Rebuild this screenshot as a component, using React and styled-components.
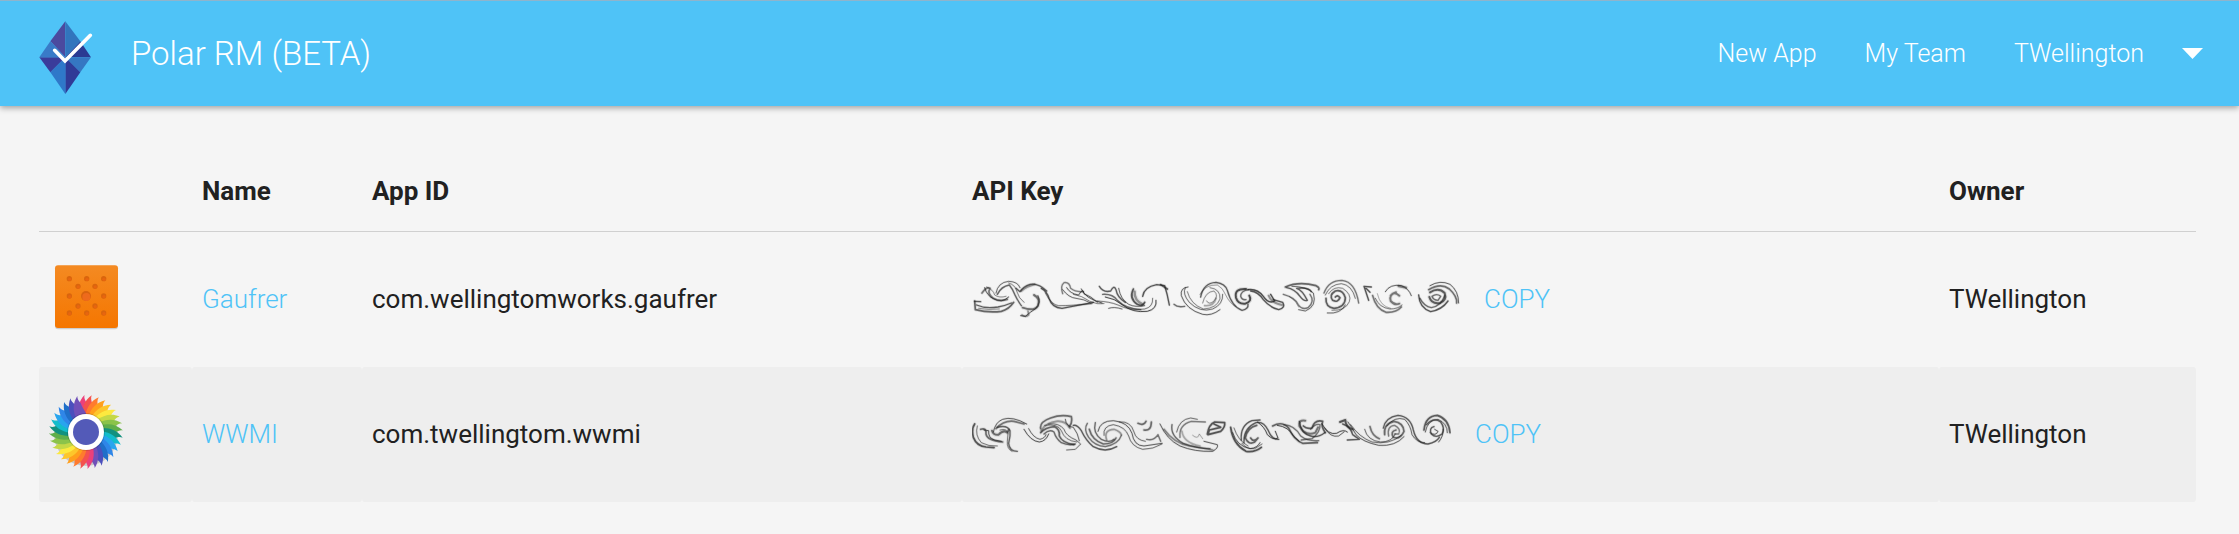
import React from "react";
import styled, { createGlobalStyle } from "styled-components";

const GlobalStyle = createGlobalStyle`
  * { box-sizing: border-box; }
  body {
    margin: 0;
    background: #f5f5f5;
    color: #212121;
    font-family: Roboto, "Liberation Sans", sans-serif;
    font-size: 26px;
    font-weight: 400;
    line-height: 32px;
  }
`;

const Header = styled.header`
  display: flex;
  align-items: center;
  justify-content: space-between;
  height: 106px;
  padding: 0 36px 0 39px;
  border-top: 1px solid #8fb4cc;
  background: #4fc3f7;
  color: #fff;
  font-weight: 300;
  box-shadow: 0 2px 6px rgba(0, 0, 0, 0.35);
`;

const Brand = styled.a`
  display: flex;
  align-items: center;
  gap: 38px;
  color: inherit;
  font-size: 33px;
  line-height: 40px;
  text-decoration: none;
`;

const Nav = styled.nav`
  display: flex;
  align-items: center;
  gap: 48px;
`;

const NavLink = styled.a`
  color: inherit;
  font-size: 25px;
  text-decoration: none;
`;

const AccountButton = styled.button`
  display: flex;
  align-items: center;
  gap: 38px;
  padding: 0;
  border: 0;
  background: none;
  color: inherit;
  font: inherit;
  font-size: 25px;
  cursor: pointer;
`;

const Main = styled.main`
  padding: 44px 43px 33px 39px;
`;

const Table = styled.table`
  width: 100%;
  table-layout: fixed;
  border-collapse: separate;
  border-spacing: 0;
`;

const Col = styled.col`
  width: ${(p) => p.$width};
`;

const HeadCell = styled.th`
  height: 82px;
  padding: 0 10px;
  border-bottom: 1px solid #d0d0d0;
  font-weight: 700;
  text-align: left;
`;

const Row = styled.tr`
  &:nth-child(even) td { background: #eeeeee; }
`;

const Cell = styled.td`
  height: 135px;
  padding: 0 10px 2px;
  border-radius: 3px;
`;

const IconCell = styled(Cell)`
  padding-bottom: 6px;
`;

const AppIcon = styled.svg`
  display: block;
`;

const AppLink = styled.a`
  color: #4fc3f7;
  font-weight: 300;
  text-decoration: none;
`;

const KeyGroup = styled.div`
  display: flex;
  align-items: center;
  gap: 24px;
`;

const CopyButton = styled.button`
  padding: 0;
  border: 0;
  background: none;
  color: #4fc3f7;
  font: inherit;
  font-weight: 300;
  cursor: pointer;
`;

function Logo() {
  return (
    <svg width="54" height="80" viewBox="116 40 162 240" aria-hidden="true">
      <path d="M195 170L195 62L150 122Z" fill="#4b4a9f" />
      <path d="M195 170L195 62L240 122Z" fill="#3275bd" />
      <path d="M195 170L240 122L272 170Z" fill="#2b3a92" />
      <path d="M195 170L272 170L240 215Z" fill="#3577c2" />
      <path d="M195 170L240 215L195 280Z" fill="#303a97" />
      <path d="M195 170L195 280L150 215Z" fill="#2f78c9" />
      <path d="M195 170L150 215L117 170Z" fill="#3a3c9b" />
      <path d="M195 170L117 170L150 122Z" fill="#397bc8" />
      <path d="M163 149L194 181L270 104" fill="none" stroke="#fff" strokeWidth="11" strokeLinecap="round" />
    </svg>
  );
}

const dots = [
  [118, 355], [170, 355], [221, 355], [144, 378], [195, 378], [118, 407],
  [221, 407], [144, 437], [195, 437], [118, 458], [170, 458], [221, 458],
];

function WaffleIcon() {
  return (
    <AppIcon width="72" height="72" viewBox="57 302 216 216" aria-hidden="true">
      <defs>
        <linearGradient id="waffle" x1="0" y1="0" x2="0" y2="1">
          <stop offset="0" stopColor="#f48a22" />
          <stop offset="1" stopColor="#f57600" />
        </linearGradient>
      </defs>
      <rect x="75" y="319" width="189" height="188" rx="9" fill="#000" opacity="0.16" />
      <rect x="75" y="315" width="189" height="188" rx="9" fill="url(#waffle)" />
      {dots.map(([x, y]) => (
        <g key={`${x}-${y}`}>
          <circle cx={x} cy={y} r="8" fill="#d9650d" />
          <circle cx={x + 1} cy={y + 2} r="5" fill="#e8650f" />
        </g>
      ))}
      <circle cx="168" cy="407" r="15" fill="#d8630f" />
      <circle cx="169" cy="410" r="12" fill="#ee6a1c" />
    </AppIcon>
  );
}

const petals = [
  "#ec407a", "#f4514e", "#ff7b2e", "#ff9f1c", "#fdc62b", "#fde93f", "#c5d846",
  "#8bc34a", "#5fae4b", "#12917f", "#12bccb", "#28a5ee", "#2f86e8", "#1f6fc9",
  "#4b4fbd", "#7150b8",
];

function WheelIcon() {
  return (
    <AppIcon width="72" height="72" viewBox="-37 -36 72 72" overflow="visible" aria-hidden="true">
      <circle r="32" cy="2" opacity="0.16" />
      {[...petals, ...petals].map((fill, i) => (
        <path
          key={i}
          d="M-5 -15C-6 -24 -4 -31 3 -37C2 -34 3 -32 4 -29C4 -25 6 -20 6 -15Z"
          fill={fill}
          transform={`rotate(${i * 11.25 - 7})`}
        />
      ))}
      <circle r="19" fill="#000" opacity="0.15" />
      <circle r="18" fill="#fff" />
      <circle r="13" fill="#535ab8" />
    </AppIcon>
  );
}

/* Each stroke is [path, width, opacity]. */
const gaufrerKey = [
  ["M48 112L50 138Q90 148 128 143Q150 138 165 116", 5, 0.75],
  ["M48 113L66 114M54 124Q80 136 118 130Q140 126 158 118", 4, 0.8],
  ["M60 134Q90 140 122 136", 3, 0.5],
  ["M70 88Q84 68 94 74Q84 90 104 104Q122 114 146 107", 5, 0.65],
  ["M78 72Q84 96 106 106Q128 120 150 100", 3, 0.8],
  ["M84 70Q104 78 108 94Q122 104 142 98", 3, 0.5],
  ["M112 88Q118 56 150 53Q178 54 184 72", 3, 0.7],
  ["M116 92Q128 68 152 64Q162 76 168 92Q180 116 188 126", 4, 0.75],
  ["M150 58Q170 64 174 82Q180 104 196 116", 3, 0.55],
  ["M172 74L184 84Q194 68 214 62Q240 58 264 82", 4, 0.8],
  ["M188 82Q204 68 228 62", 6, 0.5],
  ["M226 94Q246 104 238 126Q228 144 192 132", 6, 0.7],
  ["M238 96Q248 116 232 134Q214 146 200 158L186 156", 3, 0.8],
  ["M190 154Q202 162 210 154L208 142", 5, 0.5],
  ["M248 74Q266 84 272 106Q280 132 310 134L404 116", 4, 0.85],
  ["M260 88Q278 124 300 126Q340 126 400 120", 3, 0.6],
  ["M312 90Q304 66 316 57Q332 54 336 74Q350 86 374 84", 4, 0.6],
  ["M312 78Q330 102 352 104Q376 106 396 118", 3, 0.7],
  ["M324 72Q334 90 360 94Q374 70 376 90Q398 98 416 116", 3, 0.75],
  ["M368 76Q378 104 430 118", 3, 0.8],
  ["M344 92Q370 96 392 112Q416 124 436 120", 2, 0.8],
  ["M422 68Q434 88 456 82Q466 62 472 78Q476 102 500 116", 4, 0.8],
  ["M432 92Q462 90 476 110Q502 136 546 138", 4, 0.7],
  ["M440 100Q468 104 492 124Q522 148 566 143Q596 136 592 110", 3, 0.9],
  ["M416 112Q454 114 478 124Q514 142 558 136Q584 130 582 104", 3, 0.6],
  ["M450 134Q466 128 490 136", 3, 0.7],
  ["M480 74Q486 108 510 122Q530 132 558 126", 3, 0.7],
  ["M524 76Q510 104 536 122Q552 130 558 116", 5, 0.85],
  ["M528 84Q526 110 552 122", 7, 0.5],
  ["M552 98Q556 70 594 63L618 66Q626 90 632 124", 4, 0.85],
  ["M606 63L626 76", 5, 0.8],
  ["M646 122Q656 132 678 128", 4, 0.7],
  ["M688 70Q664 72 668 96Q682 138 732 152Q758 158 784 138", 3, 0.75],
  ["M680 72Q670 90 692 116Q724 148 762 136Q794 122 792 92", 3, 0.65],
  ["M686 84Q696 122 734 136Q774 134 784 106Q786 76 754 72", 3, 0.55],
  ["M726 100Q734 58 772 56Q800 60 806 80Q820 130 850 140Q870 136 868 122", 4, 0.8],
  ["M732 118Q740 84 766 82Q782 96 764 114Q750 124 744 112", 3, 0.5],
  ["M724 92Q740 62 776 64Q792 72 800 92Q812 118 832 130", 2, 0.6],
  ["M738 126Q766 128 772 104", 5, 0.4],
  ["M862 76Q826 74 832 102Q838 122 860 120Q882 112 872 96", 6, 0.9],
  ["M870 78Q846 82 846 98Q850 110 862 108", 4, 0.7],
  ["M868 78Q896 74 914 98Q930 122 948 112L936 92", 4, 0.9],
  ["M876 82Q898 84 914 108Q934 132 960 138Q982 132 972 116L944 108", 4, 0.85],
  ["M930 96Q938 118 970 124", 6, 0.5],
  ["M980 70Q1020 52 1072 66Q1084 72 1080 78", 5, 0.75],
  ["M974 92Q1010 102 1018 122Q1030 140 1048 132Q1070 114 1054 92", 4, 0.65],
  ["M984 72Q1008 76 1024 98Q1036 114 1046 110Q1030 78 1014 74Q1050 70 1058 84", 4, 0.8],
  ["M1000 68Q1042 68 1064 88Q1076 128 1040 142L1020 138", 3, 0.7],
  ["M992 98Q1014 112 1020 130", 2, 0.5],
  ["M1096 88Q1110 50 1150 50Q1190 54 1200 118", 4, 0.65],
  ["M1100 94Q1114 62 1148 60Q1180 64 1190 104", 3, 0.6],
  ["M1102 104Q1100 130 1126 134Q1160 130 1160 102Q1152 76 1130 82Q1110 94 1122 110Q1138 118 1144 102Q1136 92 1130 100", 5, 0.8],
  ["M1106 148Q1146 152 1160 124", 3, 0.7],
  ["M1110 90Q1126 66 1152 74Q1180 92 1172 114Q1160 142 1120 140", 3, 0.55],
  ["M1238 70L1216 68L1230 110M1222 74L1234 86", 4, 0.85],
  ["M1280 84Q1294 60 1328 66Q1350 74 1358 96", 3, 0.75],
  ["M1320 67L1342 72", 7, 0.6],
  ["M1312 86Q1290 92 1296 112Q1308 126 1322 120M1296 96Q1306 82 1322 96", 6, 0.65],
  ["M1242 96Q1252 136 1282 146Q1312 148 1328 130", 5, 0.65],
  ["M1250 104Q1262 132 1294 136Q1318 136 1330 124", 3, 0.6],
  ["M1256 90Q1264 128 1296 134", 2, 0.5],
  ["M1380 94Q1382 132 1416 144Q1450 138 1468 112", 4, 0.85],
  ["M1384 104Q1396 128 1418 132Q1448 126 1458 96", 4, 0.7],
  ["M1414 66Q1444 48 1474 62Q1500 82 1500 118", 3, 0.75],
  ["M1410 78Q1446 56 1472 76Q1496 98 1494 118", 5, 0.7],
  ["M1414 86Q1440 70 1458 88Q1466 110 1444 118Q1418 122 1412 100", 6, 0.8],
  ["M1420 98Q1434 88 1446 98L1438 110Q1424 110 1420 98", 4, 0.7],
];

const wwmiKey = [
  ["M48 76Q38 90 44 116Q54 142 82 145L106 147", 5, 0.85],
  ["M56 82Q48 110 68 132Q90 144 116 142", 3, 0.6],
  ["M66 92Q84 86 82 106Q86 126 132 130", 5, 0.7],
  ["M76 94L90 96Q88 118 108 124L128 128", 3, 0.8],
  ["M100 96Q104 110 120 108Q134 92 146 102L150 94", 6, 0.7],
  ["M104 100Q110 70 132 62Q162 52 204 76", 3, 0.75],
  ["M112 90Q136 64 166 68L196 76", 5, 0.65],
  ["M116 86Q146 78 154 96Q156 112 150 134Q152 158 176 158", 4, 0.75],
  ["M124 94Q144 88 148 104L146 128Q144 150 160 158", 3, 0.6],
  ["M196 92Q216 128 242 130Q262 128 270 106", 3, 0.8],
  ["M210 90Q224 118 244 122Q260 118 262 108", 3, 0.7],
  ["M246 90Q242 70 276 58Q308 46 338 54Q342 72 332 84", 5, 0.7],
  ["M248 96Q260 72 296 68Q320 66 334 88", 6, 0.45],
  ["M246 102Q260 86 288 84Q304 92 302 112Q310 132 346 138", 5, 0.75],
  ["M256 106Q272 90 286 100Q292 120 308 132Q330 142 350 136", 4, 0.7],
  ["M270 76Q302 72 316 92Q322 112 352 124L366 136L350 152L324 154", 3, 0.65],
  ["M258 80Q298 74 308 96Q318 126 354 130", 3, 0.6],
  ["M320 62Q322 84 344 86Q358 104 362 126", 3, 0.7],
  ["M344 80Q356 78 368 96Q382 126 404 144Q440 164 474 144", 4, 0.8],
  ["M386 74Q374 92 390 116Q408 142 440 144Q480 136 488 110", 4, 0.65],
  ["M392 92Q400 124 434 136Q464 136 472 118", 5, 0.7],
  ["M410 72Q402 104 428 122Q452 134 466 122", 4, 0.7],
  ["M418 98Q424 66 464 66Q508 70 520 104Q526 142 556 142L610 134", 3, 0.75],
  ["M436 110Q432 82 464 78Q500 84 510 112Q518 144 552 152Q584 152 610 136", 3, 0.65],
  ["M444 124Q434 94 466 92Q484 98 488 108", 5, 0.45],
  ["M482 70Q516 66 526 100Q532 124 560 128", 3, 0.65],
  ["M538 74Q556 82 562 68M556 94Q578 98 578 70", 5, 0.7],
  ["M564 122Q586 128 598 108L606 128", 4, 0.65],
  ["M604 76Q624 122 664 142Q708 160 762 158Q780 148 776 138L736 128", 3, 0.75],
  ["M616 92Q646 134 692 142Q734 148 762 154", 5, 0.55],
  ["M640 78Q634 112 674 134Q716 150 754 150", 4, 0.7],
  ["M654 100Q662 62 696 58L716 62", 3, 0.65],
  ["M664 116Q660 78 698 68L740 70", 4, 0.6],
  ["M670 98Q674 132 724 142", 5, 0.35],
  ["M702 110Q718 124 722 106L732 120", 3, 0.35],
  ["M746 106Q750 78 768 70L798 72Q800 86 786 98L748 108L752 94L786 86L766 76", 5, 0.85],
  ["M816 86Q822 136 862 158Q888 162 908 146", 5, 0.85],
  ["M822 102Q834 142 874 150Q896 148 904 132", 3, 0.75],
  ["M826 88Q838 126 868 142", 3, 0.6],
  ["M848 124Q844 80 880 66L904 64", 4, 0.8],
  ["M856 132Q854 88 892 72Q914 66 928 94Q940 124 960 122", 4, 0.8],
  ["M876 118Q884 132 898 118L888 130Q870 140 860 118Q866 86 894 80", 5, 0.75],
  ["M910 136L888 150Q862 152 850 134", 3, 0.6],
  ["M896 70Q918 84 926 108Q944 126 958 118L950 98", 3, 0.85],
  ["M942 82Q970 66 990 88Q1006 124 1032 134L1076 132", 5, 0.75],
  ["M956 80Q990 84 1006 114L1022 128", 3, 0.85],
  ["M976 78Q1008 80 1026 112Q1046 128 1080 126", 4, 0.65],
  ["M1022 68Q1026 104 1056 112Q1078 118 1098 102", 4, 0.8],
  ["M1040 66Q1020 62 1022 82Q1040 114 1070 102L1078 86", 6, 0.65],
  ["M1034 82Q1044 92 1060 88Q1068 62 1092 68Q1086 82 1100 102", 5, 0.8],
  ["M1056 92Q1070 74 1084 78Q1086 100 1060 120L1028 124", 4, 0.65],
  ["M1090 76Q1108 110 1134 104Q1154 90 1166 100", 3, 0.85],
  ["M1098 88Q1116 118 1140 112L1156 100", 3, 0.7],
  ["M1144 70L1160 64Q1160 84 1182 92", 6, 0.85],
  ["M1152 76Q1176 84 1182 108L1202 122L1166 124", 4, 0.8],
  ["M1168 70Q1180 86 1192 108Q1212 130 1260 140Q1310 144 1336 114", 3, 0.75],
  ["M1176 78Q1202 116 1240 130Q1292 140 1328 110", 3, 0.65],
  ["M1218 92Q1226 126 1266 130Q1300 130 1310 106", 3, 0.65],
  ["M1234 84Q1240 112 1262 120", 5, 0.65],
  ["M1274 88Q1280 56 1318 50Q1356 54 1364 94Q1374 136 1408 136Q1434 130 1442 116", 4, 0.8],
  ["M1278 108Q1274 76 1306 68Q1334 72 1336 98Q1324 124 1304 116Q1294 98 1312 94", 5, 0.7],
  ["M1284 82Q1308 52 1338 62Q1356 80 1360 108Q1374 132 1398 132", 3, 0.7],
  ["M1290 112Q1284 82 1308 80Q1328 90 1320 106L1308 106", 4, 0.6],
  ["M1396 94Q1400 52 1436 50Q1470 60 1474 102", 5, 0.8],
  ["M1400 100Q1406 64 1438 62Q1466 74 1466 102", 3, 0.7],
  ["M1404 78Q1424 54 1446 70Q1460 88 1450 106Q1432 120 1418 106Q1410 88 1426 84", 4, 0.8],
  ["M1414 102Q1432 114 1438 98L1428 92M1440 130Q1454 114 1454 92", 3, 0.75],
];

function MaskedKey({ strokes, width }) {
  return (
    <svg
      width={width}
      height="40"
      viewBox={`40 46 ${width * 3} 120`}
      fill="none"
      stroke="#222"
      strokeLinecap="round"
      strokeLinejoin="round"
      role="img"
      aria-label="Obscured API key"
    >
      {strokes.map(([d, w, o], i) => (
        <g key={i}>
          <path d={d} strokeWidth={w * 2} opacity={o * 0.15} />
          <path d={d} strokeWidth={w} opacity={o * 0.85} />
        </g>
      ))}
    </svg>
  );
}

const apps = [
  { name: "Gaufrer", id: "com.wellingtomworks.gaufrer", Icon: WaffleIcon, strokes: gaufrerKey, keyWidth: 488 },
  { name: "WWMI", id: "com.twellingtom.wwmi", Icon: WheelIcon, strokes: wwmiKey, keyWidth: 479 },
];

export default function App() {
  return (
    <>
      <GlobalStyle />
      <Header>
        <Brand href="#">
          <Logo />
          <span>Polar RM (BETA)</span>
        </Brand>
        <Nav>
          <NavLink href="#new">New App</NavLink>
          <NavLink href="#team">My Team</NavLink>
          <AccountButton type="button">
            TWellington
            <svg width="21" height="11" viewBox="0 0 21 11" aria-hidden="true">
              <path d="M0 0H21L10.5 11Z" fill="#fff" />
            </svg>
          </AccountButton>
        </Nav>
      </Header>
      <Main>
        <Table>
          <colgroup>
            <Col $width="153px" />
            <Col $width="170px" />
            <Col $width="600px" />
            <Col />
            <Col $width="257px" />
          </colgroup>
          <thead>
            <tr>
              <HeadCell aria-label="Icon" />
              <HeadCell>Name</HeadCell>
              <HeadCell>App ID</HeadCell>
              <HeadCell>API Key</HeadCell>
              <HeadCell>Owner</HeadCell>
            </tr>
          </thead>
          <tbody>
            {apps.map(({ name, id, Icon, strokes, keyWidth }) => (
              <Row key={name}>
                <IconCell><Icon /></IconCell>
                <Cell><AppLink href="#app">{name}</AppLink></Cell>
                <Cell>{id}</Cell>
                <Cell>
                  <KeyGroup>
                    <MaskedKey strokes={strokes} width={keyWidth} />
                    <CopyButton type="button">COPY</CopyButton>
                  </KeyGroup>
                </Cell>
                <Cell>TWellington</Cell>
              </Row>
            ))}
          </tbody>
        </Table>
      </Main>
    </>
  );
}
